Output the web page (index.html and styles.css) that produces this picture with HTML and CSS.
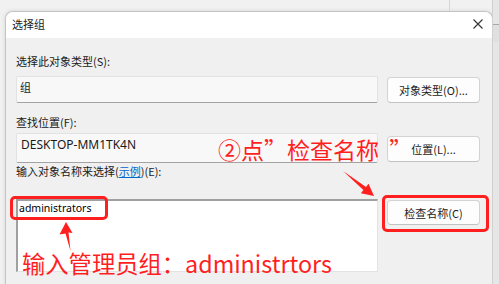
FILE: index.html
```html
<!DOCTYPE html>
<html lang="zh-CN">
<head>
<meta charset="utf-8">
<title>选择组</title>
<link rel="stylesheet" href="styles.css">
</head>
<body>
<div class="screen">
  <div class="bg-line"></div>
  <div class="bg-right"><div class="bg-blue"></div></div>
  <div class="dialog">
    <div class="titlebar">
      <span class="title">选择组</span>
      <svg class="close" width="10" height="10" viewBox="0 0 10 10"><path d="M0.5 0.5 L9.5 9.5 M9.5 0.5 L0.5 9.5" stroke="#333" stroke-width="1.1" fill="none"/></svg>
    </div>
    <div class="content">
      <div class="label l1">选择此对象类型(S):</div>
      <div class="row r1">
        <div class="field f1">组</div>
        <div class="btn b1">对象类型(O)...</div>
      </div>
      <div class="label l2">查找位置(F):</div>
      <div class="row r2">
        <div class="field f2">DESKTOP-MM1TK4N</div>
        <div class="btn b2">位置(L)...</div>
      </div>
      <div class="label l3">输入对象名称来选择(<span class="link">示例</span>)(E):</div>
      <div class="row r3">
        <div class="textarea">administrators</div>
        <div class="btn b3">检查名称(C)</div>
      </div>
    </div>
  </div>

  <div class="note note-top">②点”检查名称  ”</div>
  <div class="note note-bottom">输入管理员组：administrtors</div>
  <div class="redbox box-admin"></div>
  <div class="redbox box-check"></div>
  <svg class="arrows" width="499" height="284" viewBox="0 0 499 284">
    <polygon points="66,222 72.5,233 68.5,232.5 70.5,251 65.5,233.5 59.5,234.5" fill="#ff1f1f"/>
    <polygon points="374,196 368.5,183.8 366,187 343,171 363.4,190.1 360.9,193.2" fill="#ff1f1f"/>
  </svg>
</div>
</body>
</html>
```
FILE: styles.css
```css
* { box-sizing: border-box; }
html, body { margin: 0; padding: 0; }
body {
  width: 499px;
  height: 284px;
  overflow: hidden;
  background: #f1f1f1;
  font-family: "Noto Sans CJK SC", "Noto Sans", sans-serif;
}
.screen {
  position: relative;
  width: 499px;
  height: 284px;
  overflow: hidden;
  padding: 11px 0 0 5px;
}
.bg-line {
  position: absolute;
  left: 449px; top: 0;
  width: 1px; height: 11px;
  background: #d6d6d6;
}
.bg-right {
  position: absolute;
  left: 492px; top: 0;
  width: 7px; height: 284px;
  background: #e6e6e6;
  border-left: 1px solid #d0d0d0;
}
.bg-blue {
  margin-top: 24px;
  height: 18px;
  border-top: 1px solid #a8a8a8;
  background: #e0e0e0;
}
.dialog {
  width: 488px;
  height: 273px;
  border: 1px solid #c4c4c4;
  border-bottom: none;
  border-radius: 8px 8px 0 0;
  overflow: hidden;
  background: #f0f0f0;
  box-shadow: 0 0 4px rgba(0,0,0,0.12);
}
.titlebar {
  height: 26px;
  background: #ffffff;
  display: flex;
  align-items: center;
  justify-content: space-between;
  padding: 0 9px 2px 6px;
}
.title {
  font-size: 11px;
  color: #1a1a1a;
}
.close { display: block; }
.content {
  padding: 15px 0 0 10px;
  font-size: 11px;
  color: #1a1a1a;
}
.label {
  height: 16px;
  line-height: 16px;
}
.l2 { margin-top: 11px; }
.link { color: #0066cc; text-decoration: underline; }
.row {
  display: flex;
  gap: 9px;
  align-items: flex-start;
}
.r1 { margin-top: 7px; }
.r2 { margin-top: 3px; }
.r3 { margin-top: 20px; }
.field {
  width: 362px;
  background: #f8f8f8;
  border: 1px solid #e2e2e2;
  border-bottom-color: #a3a3a3;
  border-radius: 2px;
  padding-left: 3px;
}
.f1 {
  height: 27px;
  line-height: 20px;
  font-size: 11px;
}
.f2 {
  height: 30px;
  line-height: 22px;
  font-family: "Noto Sans", sans-serif;
  font-size: 12px;
  padding-left: 4px;
}
.btn {
  width: 93px;
  height: 26px;
  margin-top: 1px;
  background: #fdfdfd;
  border: 1px solid #d3d3d3;
  border-bottom-color: #c2c2c2;
  border-radius: 4px;
  display: flex;
  align-items: center;
  justify-content: center;
  font-size: 11px;
  color: #1a1a1a;
}
.b2 { margin-top: 3px; }
.b3 { height: 25px; margin-top: 1px; }
.textarea {
  width: 362px;
  height: 73px;
  background: #ffffff;
  border-top: 2px solid #a0a0a0;
  border-left: 2px solid #a0a0a0;
  border-right: 1px solid #e3e3e3;
  border-bottom: 1px solid #e3e3e3;
  font-family: "Noto Sans", sans-serif;
  font-size: 10.5px;
  padding: 0 0 0 1px;
  line-height: 14px;
  color: #000;
}
.note {
  position: absolute;
  color: #ff1f1f;
  font-size: 23px;
  line-height: 28px;
  white-space: pre;
  font-family: "Noto Sans CJK SC", sans-serif;
}
.note-top { left: 218px; top: 135px; }
.note-bottom { left: 22px; top: 249px; font-size: 23.3px; }
.redbox {
  position: absolute;
  border: 3px solid #ff1f1f;
  border-radius: 5px;
}
.box-admin { left: 10px; top: 196px; width: 98px; height: 24px; }
.box-check { left: 382px; top: 195px; width: 107px; height: 37px; }
.arrows { position: absolute; left: 0; top: 0; pointer-events: none; }
```
